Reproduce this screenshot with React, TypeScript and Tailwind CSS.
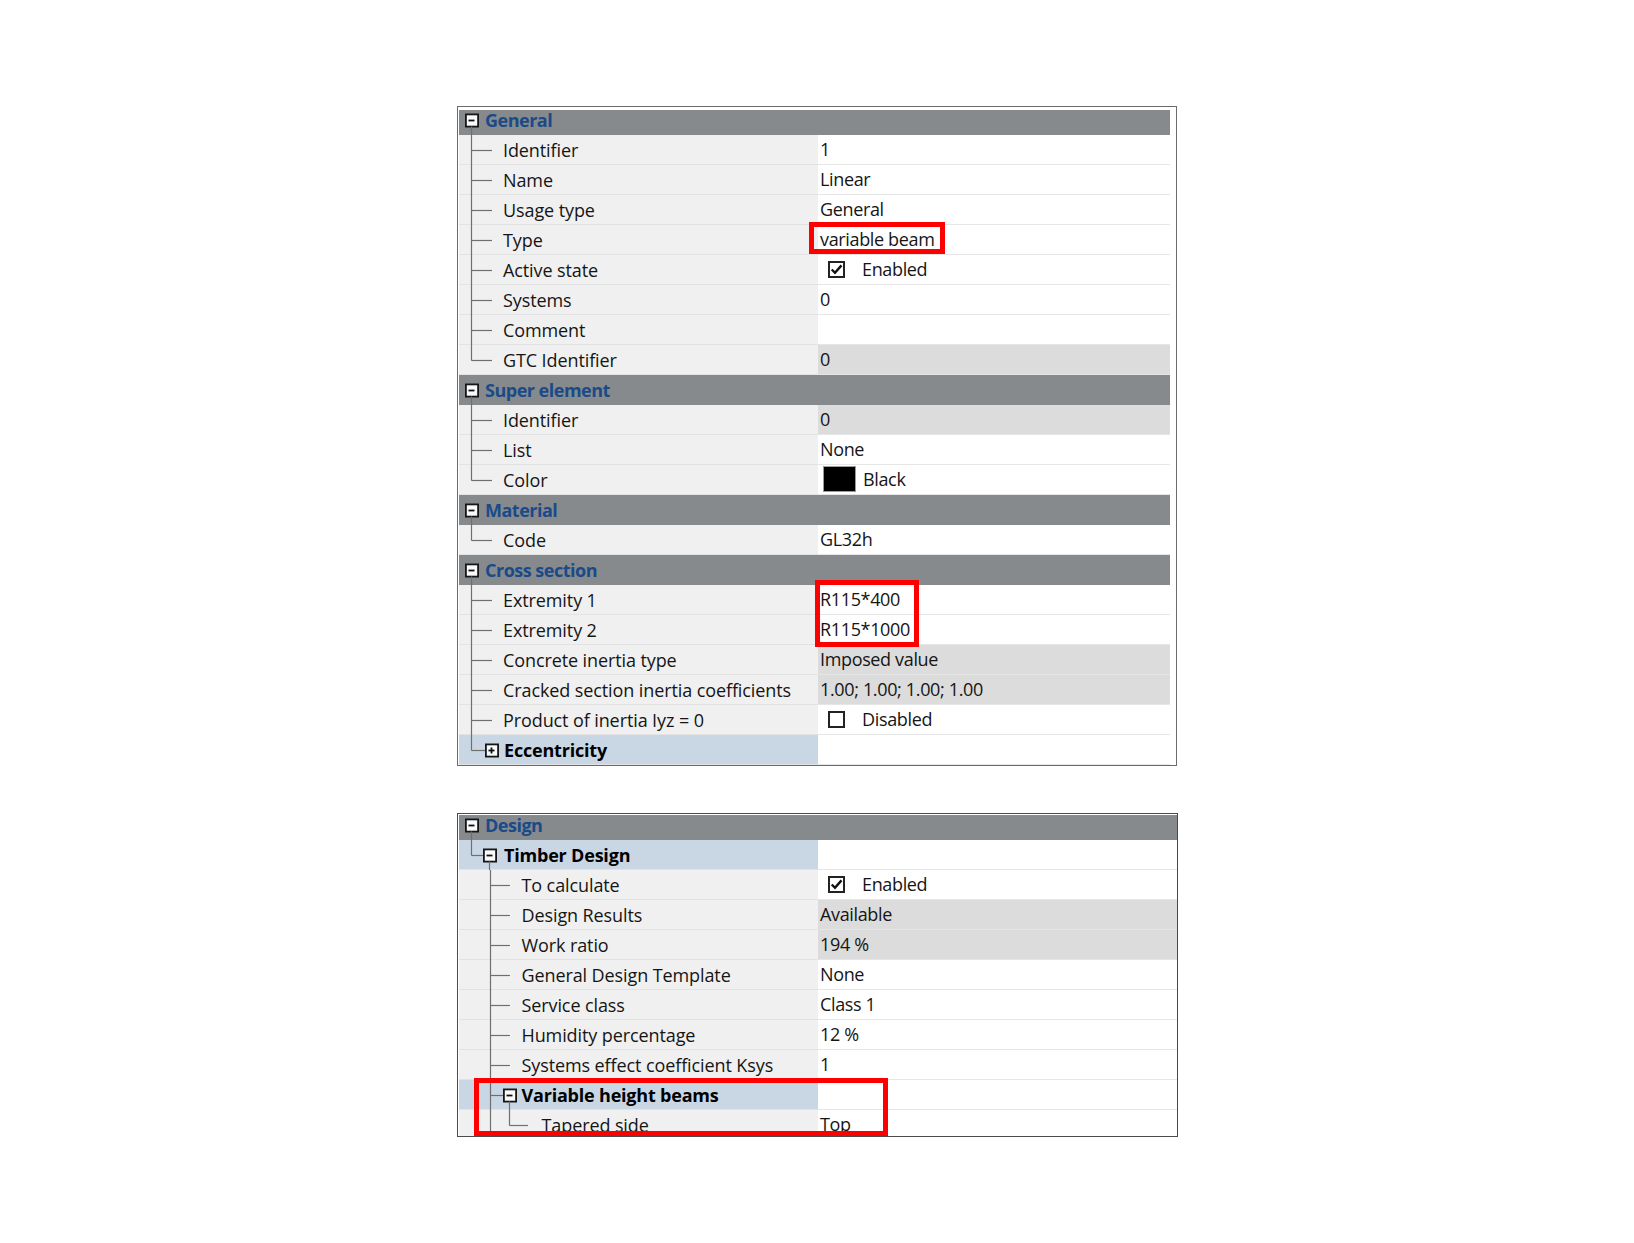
import React from "react";

type Gutter = "l1" | "l1last" | "l1plusLast" | "l1minusLast" | "l2" | "l2minus" | "l3last";

type ValueKind =
  | { t: "text"; v: string }
  | { t: "check"; on: boolean; v: string }
  | { t: "color"; v: string };

type Item =
  | { kind: "header"; title: string; short?: boolean }
  | {
      kind: "row";
      label: string;
      gutter: Gutter;
      value?: ValueKind;
      gray?: boolean;
      node?: boolean;
      clip?: boolean;
    };

const LINE = "#6f6f6f";

const gutterWidth: Record<Gutter, number> = {
  l1: 44,
  l1last: 44,
  l1plusLast: 45,
  l1minusLast: 45,
  l2: 62.5,
  l2minus: 62.5,
  l3last: 82.5,
};

function Box({ x, y, plus }: { x: number; y: number; plus?: boolean }) {
  return (
    <g>
      <rect x={x + 0.9} y={y - 6.1} width={12.2} height={12.2} fill="#fafafa" stroke="#161616" strokeWidth={1.8} />
      <line x1={x + 3.5} x2={x + 9.5} y1={y} y2={y} stroke="#111" strokeWidth={1.8} />
      {plus ? <line x1={x + 6.5} x2={x + 6.5} y1={y - 3} y2={y + 3} stroke="#111" strokeWidth={1.8} /> : null}
    </g>
  );
}

function GutterSvg({ type }: { type: Gutter }) {
  const h = 30;
  const m = 15.5;
  const L = (x1: number, y1: number, x2: number, y2: number) => (
    <line x1={x1} y1={y1} x2={x2} y2={y2} stroke={LINE} strokeWidth={1.2} />
  );
  let body: React.ReactNode = null;
  switch (type) {
    case "l1":
      body = (
        <>
          {L(12.5, 0, 12.5, h)}
          {L(12.5, m, 33, m)}
        </>
      );
      break;
    case "l1last":
      body = (
        <>
          {L(12.5, 0, 12.5, m)}
          {L(12.5, m, 33, m)}
        </>
      );
      break;
    case "l1plusLast":
      body = (
        <>
          {L(12.5, 0, 12.5, m)}
          {L(12.5, m, 26, m)}
          <Box x={26} y={m} plus />
        </>
      );
      break;
    case "l1minusLast":
      body = (
        <>
          {L(12.5, 0, 12.5, m)}
          {L(12.5, m, 24, m)}
          <Box x={24} y={m} />
          {L(30.5, m + 6, 30.5, h)}
        </>
      );
      break;
    case "l2":
      body = (
        <>
          {L(31.5, 0, 31.5, h)}
          {L(31.5, m, 51, m)}
        </>
      );
      break;
    case "l2minus":
      body = (
        <>
          {L(31.5, 0, 31.5, h)}
          {L(31.5, m, 44, m)}
          <Box x={44} y={m} />
          {L(50.5, m + 6, 50.5, h)}
        </>
      );
      break;
    case "l3last":
      body = (
        <>
          {L(31.5, 0, 31.5, h)}
          {L(50.5, 0, 50.5, m)}
          {L(50.5, m, 69, m)}
        </>
      );
      break;
  }
  return (
    <svg width={gutterWidth[type]} height={h} className="shrink-0">
      {body}
    </svg>
  );
}

function Checkbox({ on }: { on: boolean }) {
  return (
    <span className="flex h-[17px] w-[17px] shrink-0 items-center justify-center border-2 border-[#222] bg-white">
      {on ? (
        <svg width="13" height="13" viewBox="0 0 12 12">
          <path d="M1.6 6 L4.6 9 L10.6 2.2" fill="none" stroke="#111" strokeWidth="2.2" />
        </svg>
      ) : null}
    </span>
  );
}

function Value({ value }: { value?: ValueKind }) {
  if (!value) return null;
  if (value.t === "check") {
    return (
      <div className="flex items-center pl-[10px]">
        <Checkbox on={value.on} />
        <span className="pl-[17px]">{value.v}</span>
      </div>
    );
  }
  if (value.t === "color") {
    return (
      <div className="flex items-center pl-[5px]">
        <span className="h-[26px] w-[33px] shrink-0 border border-[#9a9a9a] bg-black" />
        <span className="pl-[7px]">{value.v}</span>
      </div>
    );
  }
  return <span className="pl-[2px]">{value.v}</span>;
}

function Header({ title, short }: { title: string; short?: boolean }) {
  const h = short ? 25 : 30;
  const c = short ? 10.5 : 15.5;
  return (
    <div className={`flex items-start bg-[#878a8d] ${short ? "h-[25px]" : "h-[30px]"}`}>
      <svg width={26} height={h} className="shrink-0">
        <Box x={6} y={c} />
        <line x1={12.5} y1={c + 6} x2={12.5} y2={h} stroke={LINE} strokeWidth={1.2} />
      </svg>
      <span
        className={`font-bold tracking-[-0.5px] text-[#1a4a88] ${short ? "leading-[20px]" : "leading-[30px]"}`}
      >
        {title}
      </span>
    </div>
  );
}

function Row({ item }: { item: Extract<Item, { kind: "row" }> }) {
  return (
    <div className={`flex ${item.clip ? "h-[26px] overflow-hidden" : "h-[30px]"}`}>
      <div
        className={`flex h-[30px] w-[359px] shrink-0 items-start leading-[30px] shadow-[inset_0_-1px_0_#e3e3e3] ${
          item.node ? "bg-[#c9d7e5] font-bold tracking-[-0.2px] text-black" : "bg-[#f0f0f0] tracking-[-0.1px]"
        }`}
      >
        <GutterSvg type={item.gutter} />
        <span className="whitespace-nowrap">{item.label}</span>
      </div>
      <div
        className={`flex h-[30px] flex-1 items-start pt-[0px] leading-[28px] tracking-[-0.35px] shadow-[inset_0_-1px_0_#e6e6e6] ${
          item.gray ? "bg-[#dcdcdc]" : "bg-white"
        }`}
      >
        <Value value={item.value} />
      </div>
    </div>
  );
}

const t = (v: string): ValueKind => ({ t: "text", v });

const panelOne: Item[] = [
  { kind: "header", title: "General", short: true },
  { kind: "row", label: "Identifier", gutter: "l1", value: t("1") },
  { kind: "row", label: "Name", gutter: "l1", value: t("Linear") },
  { kind: "row", label: "Usage type", gutter: "l1", value: t("General") },
  { kind: "row", label: "Type", gutter: "l1", value: t("variable beam") },
  { kind: "row", label: "Active state", gutter: "l1", value: { t: "check", on: true, v: "Enabled" } },
  { kind: "row", label: "Systems", gutter: "l1", value: t("0") },
  { kind: "row", label: "Comment", gutter: "l1" },
  { kind: "row", label: "GTC Identifier", gutter: "l1last", value: t("0"), gray: true },
  { kind: "header", title: "Super element" },
  { kind: "row", label: "Identifier", gutter: "l1", value: t("0"), gray: true },
  { kind: "row", label: "List", gutter: "l1", value: t("None") },
  { kind: "row", label: "Color", gutter: "l1last", value: { t: "color", v: "Black" } },
  { kind: "header", title: "Material" },
  { kind: "row", label: "Code", gutter: "l1last", value: t("GL32h") },
  { kind: "header", title: "Cross section" },
  { kind: "row", label: "Extremity 1", gutter: "l1", value: t("R115*400") },
  { kind: "row", label: "Extremity 2", gutter: "l1", value: t("R115*1000") },
  { kind: "row", label: "Concrete inertia type", gutter: "l1", value: t("Imposed value"), gray: true },
  { kind: "row", label: "Cracked section inertia coefficients", gutter: "l1", value: t("1.00; 1.00; 1.00; 1.00"), gray: true },
  { kind: "row", label: "Product of inertia Iyz = 0", gutter: "l1", value: { t: "check", on: false, v: "Disabled" } },
  { kind: "row", label: "Eccentricity", gutter: "l1plusLast", node: true },
];

const panelTwo: Item[] = [
  { kind: "header", title: "Design", short: true },
  { kind: "row", label: "Timber Design", gutter: "l1minusLast", node: true },
  { kind: "row", label: "To calculate", gutter: "l2", value: { t: "check", on: true, v: "Enabled" } },
  { kind: "row", label: "Design Results", gutter: "l2", value: t("Available"), gray: true },
  { kind: "row", label: "Work ratio", gutter: "l2", value: t("194 %"), gray: true },
  { kind: "row", label: "General Design Template", gutter: "l2", value: t("None") },
  { kind: "row", label: "Service class", gutter: "l2", value: t("Class 1") },
  { kind: "row", label: "Humidity percentage", gutter: "l2", value: t("12 %") },
  { kind: "row", label: "Systems effect coefficient Ksys", gutter: "l2", value: t("1") },
  { kind: "row", label: "Variable height beams", gutter: "l2minus", node: true },
  { kind: "row", label: "Tapered side", gutter: "l3last", value: t("Top"), clip: true },
];

function Items({ items }: { items: Item[] }) {
  return (
    <>
      {items.map((it, i) =>
        it.kind === "header" ? <Header key={i} title={it.title} short={it.short} /> : <Row key={i} item={it} />
      )}
    </>
  );
}

export default function App() {
  return (
    <div className="min-h-screen w-full bg-white font-['Open_Sans',sans-serif] text-[18px] text-[#151515]">
      <div className="flex flex-col items-start pl-[457px] pt-[106px] pb-[100px]">
        <div className="relative w-[720px] border border-[#6b6b6b] bg-white pt-[3px] pl-[1px] pr-[6px]">
          <Items items={panelOne} />
          <div className="pointer-events-none absolute left-[351px] top-[115px] h-[32px] w-[136px] border-[5px] border-[#ff0000]" />
          <div className="pointer-events-none absolute left-[357px] top-[473px] h-[67px] w-[104px] border-[5px] border-[#ff0000]" />
        </div>

        <div className="relative mt-[47px] w-[721px] border border-[#4a4a4a] bg-white pt-[1px] pl-[1px]">
          <Items items={panelTwo} />
          <div className="pointer-events-none absolute left-[16px] top-[264px] h-[58px] w-[414px] border-[5px] border-[#ff0000]" />
        </div>
      </div>
    </div>
  );
}
